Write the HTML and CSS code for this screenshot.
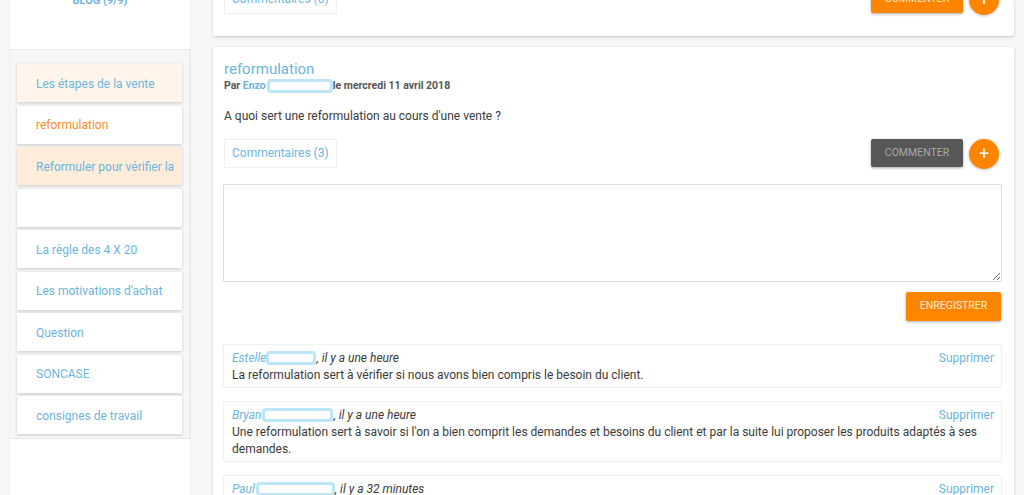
FILE: index.html
```html
<!DOCTYPE html>
<html lang="fr">
<head>
<meta charset="utf-8">
<title>Blog</title>
<link rel="stylesheet" href="styles.css">
</head>
<body>
<div class="page">
  <aside class="sidebar">
    <div class="side-head"><a class="side-title">BLOG (9/9)</a></div>
    <nav class="side-list">
      <a class="side-item tint-light">Les étapes de la vente</a>
      <a class="side-item current">reformulation</a>
      <a class="side-item tint-strong">Reformuler pour vérifier la</a>
      <a class="side-item"></a>
      <a class="side-item">La règle des 4 X 20</a>
      <a class="side-item">Les motivations d'achat</a>
      <a class="side-item">Question</a>
      <a class="side-item">SONCASE</a>
      <a class="side-item">consignes de travail</a>
    </nav>
  </aside>
  <main class="main">
    <section class="card card-top">
      <div class="actions">
        <span class="tab">Commentaires (0)</span>
        <button class="btn btn-orange">COMMENTER</button>
        <span class="fab">+</span>
      </div>
    </section>
    <section class="card card-post">
      <h2 class="post-title">reformulation</h2>
      <p class="byline">Par <a class="link">Enzo</a><span class="mask mask-author"></span>le mercredi 11 avril 2018</p>
      <p class="question">A quoi sert une reformulation au cours d'une vente ?</p>
      <div class="actions">
        <span class="tab">Commentaires (3)</span>
        <button class="btn btn-dark">COMMENTER</button>
        <span class="fab">+</span>
      </div>
      <textarea class="reply"></textarea>
      <div class="save-row"><button class="btn btn-orange btn-save">ENREGISTRER</button></div>
      <article class="comment">
        <div class="comment-head">
          <span class="meta"><a class="link">Estelle</a><span class="mask mask-a"></span>, il y a une heure</span>
          <a class="link delete">Supprimer</a>
        </div>
        <p class="comment-text">La reformulation sert à vérifier si nous avons bien compris le besoin du client.</p>
      </article>
      <article class="comment">
        <div class="comment-head">
          <span class="meta"><a class="link">Bryan</a><span class="mask mask-b"></span>, il y a une heure</span>
          <a class="link delete">Supprimer</a>
        </div>
        <p class="comment-text">Une reformulation sert à savoir si l'on a bien comprit les demandes et besoins du client et par la suite lui proposer les produits adaptés à ses demandes.</p>
      </article>
      <article class="comment">
        <div class="comment-head">
          <span class="meta"><a class="link">Paul</a><span class="mask mask-c"></span>, il y a 32 minutes</span>
          <a class="link delete">Supprimer</a>
        </div>
      </article>
    </section>
  </main>
</div>
</body>
</html>
```
FILE: styles.css
```css
* { box-sizing: border-box; }
html, body { height: 100%; }
body {
  margin: 0;
  overflow: hidden;
  background: #f7f7f7;
  font-family: Roboto, "Liberation Sans", sans-serif;
  font-size: 12px;
  color: #3a3a3a;
}
.page {
  display: flex;
  align-items: flex-start;
  height: 495px;
  padding-left: 9px;
  overflow: hidden;
}
.sidebar {
  flex: 0 0 182px;
  height: 495px;
  background: #fff;
  border-left: 1px solid #eee;
  border-right: 1px solid #eee;
}
.side-head {
  height: 49px;
  margin-top: -6px;
  text-align: center;
}
.side-title {
  color: #6cb5dc;
  font-size: 11px;
  font-weight: 700;
  line-height: 14px;
  display: block;
}
.side-list {
  display: flex;
  flex-direction: column;
  gap: 3.5px;
  height: 390px;
  margin-top: 6px;
  padding: 14px 7px 0;
  background: #f7f7f7;
  border: 1px solid #e8e8e8;
  border-width: 1px 1px 1px 0;
}
.side-item {
  display: flex;
  align-items: center;
  height: 38px;
  padding: 1px 0 0 19px;
  background: #fff;
  color: #6cb5dc;
  font-size: 12px;
  white-space: nowrap;
  overflow: hidden;
  box-shadow: 0 1px 3px rgba(0,0,0,.2);
}
.tint-light { background: #fff5ea; }
.tint-strong { background: #ffecd9; }
.current { color: #ff8a2b; }
.main {
  flex: 0 0 801px;
  margin-left: 22px;
  display: flex;
  flex-direction: column;
  gap: 11px;
  min-width: 0;
}
.card {
  background: #fff;
  border-radius: 2px;
  box-shadow: 0 1px 3px rgba(0,0,0,.22);
  padding: 0 12px 0 11px;
}
.card-top {
  height: 36px;
  display: flex;
  align-items: flex-end;
  padding-right: 15px;
  padding-bottom: 22px;
}
.card-top .actions { width: 100%; height: 29px; margin-top: 0; padding-right: 0; }
.card-post { padding-top: 13px; height: 460px; overflow: hidden; }
.post-title {
  margin: 0;
  color: #6cb5dc;
  font-size: 15px;
  font-weight: 400;
  line-height: 18px;
}
.byline {
  display: flex;
  align-items: center;
  margin: 1px 0 0;
  font-size: 10.5px;
  font-weight: 700;
  color: #555;
  line-height: 14px;
  white-space: pre;
}
.link { color: #6cb5dc; }
.mask {
  display: inline-block;
  height: 14px;
  border: 3px solid #bce6f8;
  border-radius: 4px;
  background: #fff;
}
.mask-author { width: 66px; margin-left: 1px; }
.question { margin: 16px 0 0; font-size: 12px; line-height: 15px; }
.actions {
  display: flex;
  align-items: flex-start;
  margin-top: 15px;
  padding-right: 3px;
}
.tab {
  height: 29px;
  padding: 0 7px;
  line-height: 27px;
  border: 1px solid #f0f0f0;
  color: #6cb5dc;
  font-size: 12px;
  white-space: nowrap;
}
.btn {
  border: 0;
  border-radius: 2px;
  font-family: inherit;
  font-size: 10.5px;
  line-height: 14px;
  box-shadow: 0 1px 3px rgba(0,0,0,.35);
}
.actions .btn { width: 92px; height: 28px; margin-left: auto; padding: 0; }
.btn-orange { background: #ff8500; color: #ffe9d2; }
.btn-dark { background: #575757; color: #a8a8a8; }
.fab {
  flex: 0 0 30px;
  height: 30px;
  margin-left: 6px;
  border-radius: 50%;
  background: #ff8500;
  color: #fff;
  font-size: 18px;
  line-height: 30px;
  text-align: center;
  box-shadow: 0 1px 3px rgba(0,0,0,.25);
}
.reply {
  display: block;
  width: 779px;
  height: 98px;
  margin: 15px 0 0 -1px;
  border: 1px solid #ddd;
  border-radius: 1px;
  background: #fff;
}
.save-row { display: flex; justify-content: flex-end; margin-top: 10px; padding-right: 1px; }
.btn-save { width: 95px; height: 29px; padding: 0 0 2px; }
.comment {
  margin: 13px 0 0 -1px;
  padding: 5px 7px 3.5px 8px;
  border: 1px solid #f0f0f0;
  border-radius: 2px;
}
.save-row + .comment { margin-top: 23px; }
.comment-head {
  display: flex;
  justify-content: space-between;
  line-height: 16px;
}
.meta { display: flex; align-items: center; font-style: italic; white-space: pre; }
.mask-a { width: 50px; }
.mask-b { width: 71px; margin-left: 1px; }
.mask-c { width: 79px; margin-left: 1px; }
.delete { font-style: normal; }
.comment-text { margin: 1px 0 0; line-height: 16.5px; }
```
